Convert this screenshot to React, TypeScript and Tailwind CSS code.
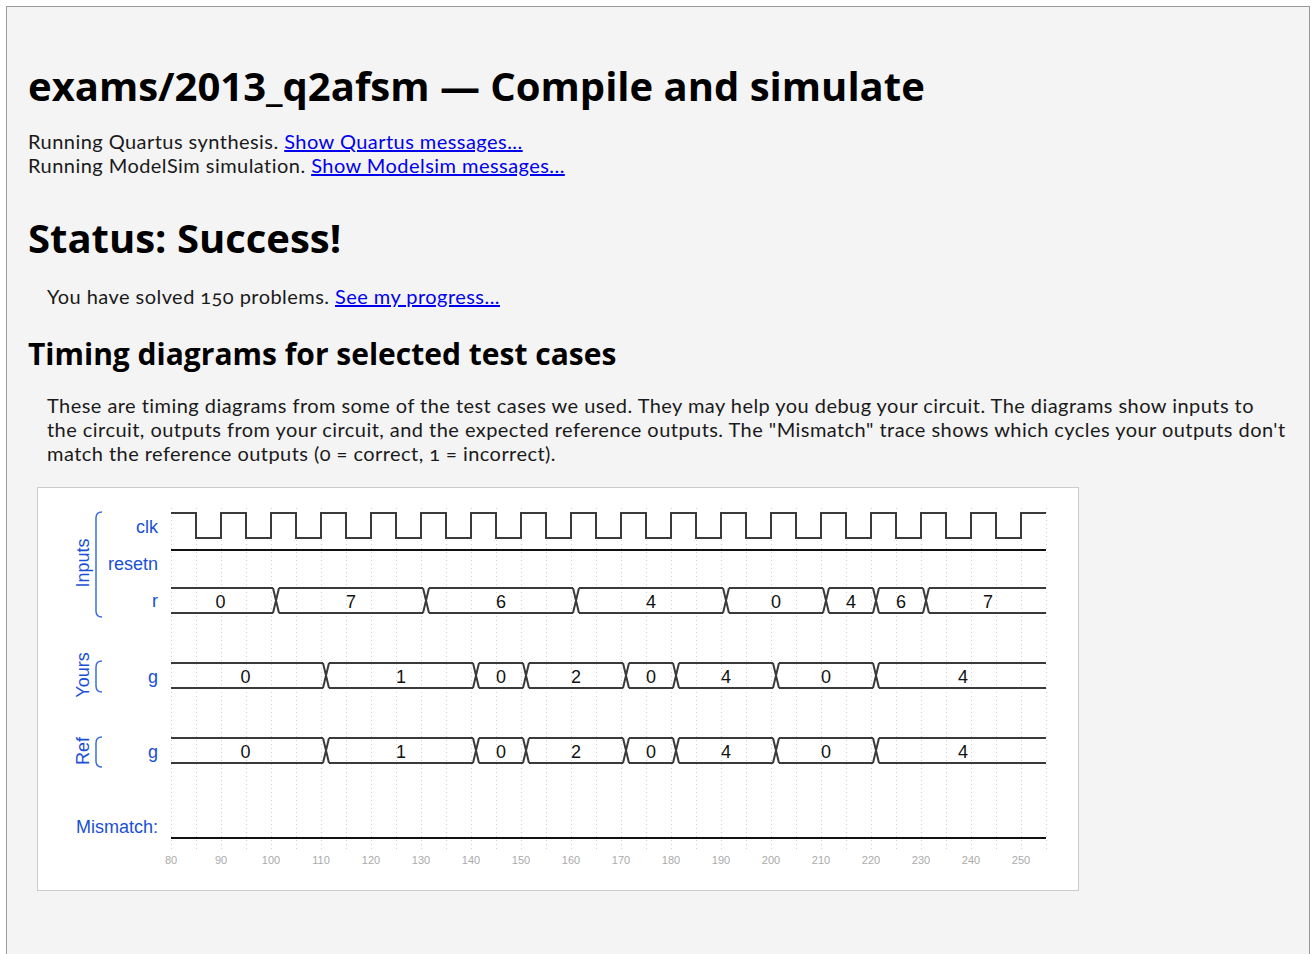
import React from "react"

const X = (t: number) => 133 + 5 * (t - 80)
const BLUE = "#1a4fd6"

type Seg = { v: string; s: number; e: number }

const busPath = (segs: Seg[], top: number, bot: number) => {
  let d = ""
  segs.forEach((g, i) => {
    const a = X(g.s) + (i > 0 ? 3 : 0)
    const b = X(g.e) - (i < segs.length - 1 ? 3 : 0)
    d += `M${a} ${top}H${b}M${a} ${bot}H${b}`
    if (i < segs.length - 1) {
      const x = X(g.e)
      d += `M${x - 3} ${top}L${x + 3} ${bot}M${x - 3} ${bot}L${x + 3} ${top}`
    }
  })
  return d
}

const mk = (vals: string[], edges: number[]): Seg[] =>
  vals.map((v, i) => ({ v, s: i === 0 ? 80 : edges[i - 1], e: i === vals.length - 1 ? 255 : edges[i] }))

const rSegs = mk(["0", "7", "6", "4", "0", "4", "6", "7"], [101, 131, 161, 191, 211, 221, 231])
const gSegs = mk(["0", "1", "0", "2", "0", "4", "0", "4"], [111, 141, 151, 171, 181, 201, 221])

// first label sits a bit left, last a bit right
const shift = (i: number, n: number) => (i === 0 ? -3 : i === n - 1 ? 2 : 0)

const Bus = ({ segs, top }: { segs: Seg[]; top: number }) => (
  <g>
    <path d={busPath(segs, top, top + 25)} stroke="#3a3a3a" strokeWidth={2} fill="none" />
    {segs.map((g, i) => (
      <text
        key={i}
        x={(X(g.s) + X(g.e)) / 2 + shift(i, segs.length)}
        y={top + 14}
        textAnchor="middle"
        dominantBaseline="central"
        fontSize={18}
        fill="#111"
      >
        {g.v}
      </text>
    ))}
  </g>
)

const Brace = ({ y1, y2 }: { y1: number; y2: number }) => (
  <path d={`M64 ${y1}Q58 ${y1} 58 ${y1 + 6}V${y2 - 6}Q58 ${y2} 64 ${y2}`} stroke="#3b6fe0" strokeWidth={1.5} fill="none" />
)

const Timing = () => {
  let clk = `M${X(80)} 25`
  for (let t = 80; t < 255; t += 5) {
    const high = (t / 5) % 2 === 0
    clk += `H${X(t + 5)}`
    if (t + 5 < 255) clk += `V${high ? 50 : 25}`
  }
  const grid = []
  for (let t = 80; t <= 255; t += 5) grid.push(t)
  const ticks = []
  for (let t = 80; t <= 250; t += 10) ticks.push(t)

  return (
    <svg width={1040} height={402} style={{ fontFamily: "'Liberation Sans', Arial, sans-serif" }}>
      {grid.map((t) => (
        <line key={t} x1={X(t) + 0.5} x2={X(t) + 0.5} y1={20} y2={362} stroke="#cfcfcf" strokeDasharray="1 3" />
      ))}

      <g fill={BLUE} fontSize={18}>
        <text x={45} y={75} textAnchor="middle" dominantBaseline="central" transform="rotate(-90 45 75)">Inputs</text>
        <text x={45} y={187} textAnchor="middle" dominantBaseline="central" transform="rotate(-90 45 187)">Yours</text>
        <text x={45} y={263} textAnchor="middle" dominantBaseline="central" transform="rotate(-90 45 263)">Ref</text>
        <text x={120} y={39} textAnchor="end" dominantBaseline="central">clk</text>
        <text x={120} y={76} textAnchor="end" dominantBaseline="central">resetn</text>
        <text x={120} y={113} textAnchor="end" dominantBaseline="central">r</text>
        <text x={120} y={189} textAnchor="end" dominantBaseline="central">g</text>
        <text x={120} y={264} textAnchor="end" dominantBaseline="central">g</text>
        <text x={120} y={339} textAnchor="end" dominantBaseline="central">Mismatch:</text>
      </g>
      <Brace y1={24} y2={129} />
      <Brace y1={173} y2={204} />
      <Brace y1={249} y2={279} />

      <path d={clk} stroke="#3a3a3a" strokeWidth={2} fill="none" />
      <line x1={X(80)} x2={X(255)} y1={62} y2={62} stroke="#111" strokeWidth={2} />
      <Bus segs={rSegs} top={100} />
      <Bus segs={gSegs} top={175} />
      <Bus segs={gSegs} top={250} />
      <line x1={X(80)} x2={X(255)} y1={350} y2={350} stroke="#111" strokeWidth={2} />

      {ticks.map((t) => (
        <text key={t} x={X(t)} y={372} textAnchor="middle" dominantBaseline="central" fontSize={11} fill="#aaa">
          {t}
        </text>
      ))}
    </svg>
  )
}

const App: React.FC = () => {
  return (
    <div className="min-h-screen bg-white pt-[6px] pl-[6px] pr-[5px]">
      <div
        className="border border-[#999] bg-[#f4f4f4] pl-[21px] pr-[21px] pt-[55px] pb-[80px] text-[#1a1a1a] text-[20px] leading-[24px] tracking-[0.45px]"
        style={{ fontFamily: "Lato, 'Open Sans', sans-serif" }}
      >
        <h1 className="text-[40px] leading-[48px] font-bold text-black tracking-normal" style={{ fontFamily: "'Open Sans', sans-serif" }}>
          exams/2013_q2afsm — Compile and simulate
        </h1>

        <div className="mt-[19px]">
          Running Quartus synthesis. <a href="#" className="text-[#0000ee] underline">Show Quartus messages...</a>
          <br />
          Running ModelSim simulation. <a href="#" className="text-[#0000ee] underline">Show Modelsim messages...</a>
        </div>

        <h2 className="mt-[37px] text-[40px] leading-[48px] font-bold text-black tracking-normal" style={{ fontFamily: "'Open Sans', sans-serif" }}>
          Status: Success!
        </h2>

        <p className="mt-[22px] pl-[19px] oldstyle-nums">
          You have solved 150 problems. <a href="#" className="text-[#0000ee] underline">See my progress...</a>
        </p>

        <h3 className="mt-[28px] text-[30px] leading-[36px] font-bold text-black tracking-normal" style={{ fontFamily: "'Open Sans', sans-serif" }}>
          Timing diagrams for selected test cases
        </h3>

        <p className="mt-[21px] pl-[19px] oldstyle-nums">
          These are timing diagrams from some of the test cases we used. They may help you debug your circuit. The diagrams show inputs to
          <br />
          the circuit, outputs from your circuit, and the expected reference outputs. The "Mismatch" trace shows which cycles your outputs don't
          <br />
          match the reference outputs (0 = correct, 1 = incorrect).
        </p>

        <div className="mt-[22px] ml-[9px] w-[1042px] h-[404px] border border-[#ccc] bg-white tracking-normal">
          <Timing />
        </div>
      </div>
    </div>
  )
}

export default App
